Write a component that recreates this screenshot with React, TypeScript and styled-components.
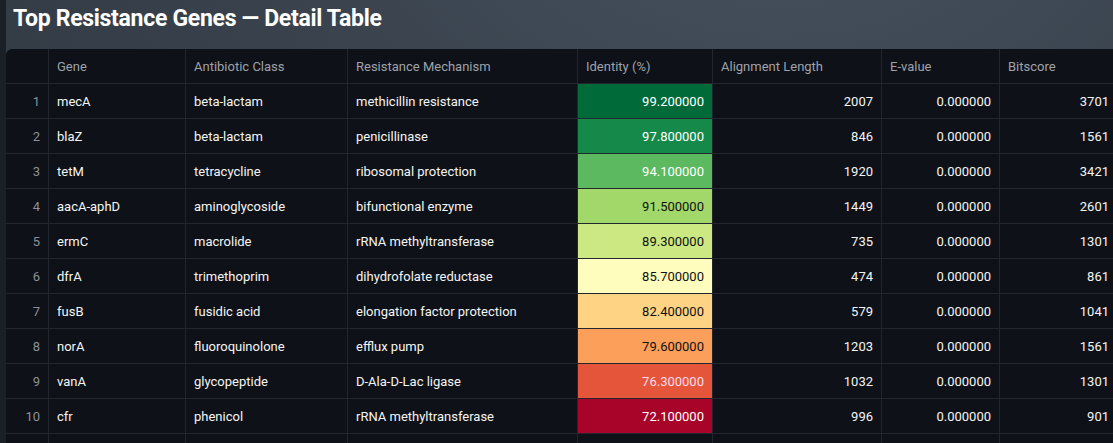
import React from "react";
import styled, { createGlobalStyle } from "styled-components";

const Global = createGlobalStyle`
  body {
    margin: 0;
    background: #0e1117;
    font-family: "Source Sans Pro", Roboto, "Noto Sans", sans-serif;
  }
`;

const rows = [
  ["mecA", "beta-lactam", "methicillin resistance", 99.2, 2007, 3701],
  ["blaZ", "beta-lactam", "penicillinase", 97.8, 846, 1561],
  ["tetM", "tetracycline", "ribosomal protection", 94.1, 1920, 3421],
  ["aacA-aphD", "aminoglycoside", "bifunctional enzyme", 91.5, 1449, 2601],
  ["ermC", "macrolide", "rRNA methyltransferase", 89.3, 735, 1301],
  ["dfrA", "trimethoprim", "dihydrofolate reductase", 85.7, 474, 861],
  ["fusB", "fusidic acid", "elongation factor protection", 82.4, 579, 1041],
  ["norA", "fluoroquinolone", "efflux pump", 79.6, 1203, 1561],
  ["vanA", "glycopeptide", "D-Ala-D-Lac ligase", 76.3, 1032, 1301],
  ["cfr", "phenicol", "rRNA methyltransferase", 72.1, 996, 901],
] as const;

const heat = [
  ["#006b39", "#fff"],
  ["#15894a", "#fff"],
  ["#5cb960", "#fff"],
  ["#a2d76a", "#111"],
  ["#cbe883", "#111"],
  ["#fefdbe", "#111"],
  ["#fed484", "#111"],
  ["#fb9f5a", "#111"],
  ["#e4553a", "#fde"],
  ["#a80328", "#fff"],
];

const cols = "43px 137px 162px 230px 135px 169px 118px 130px";

const Page = styled.div`
  width: 1113px;
  height: 443px;
  overflow: hidden;
  background: radial-gradient(ellipse at 70% -40%, #4a5561 0%, #3a434e 45%, #2f3740 100%);
  padding-left: 6px;
  box-sizing: border-box;
  border-left: 6px solid #1b1f26;
`;

const Title = styled.h2`
  margin: 0;
  height: 49px;
  padding: 2px 0 0 1px;
  box-sizing: border-box;
  color: #fff;
  font-size: 23px;
  font-weight: 700;
  letter-spacing: -0.3px;
  line-height: 34px;
`;

const Table = styled.div`
  background: #0e1117;
  border-top-left-radius: 6px;
  height: 394px;
  margin-left: -6px;
`;

const Row = styled.div<{ $head?: boolean }>`
  display: grid;
  grid-template-columns: ${cols};
  height: 35px;
  border-bottom: 1px solid #23262e;
  box-sizing: border-box;
  color: ${(p) => (p.$head ? "#9ea3ab" : "#f5f5f5")};
  font-size: 13px;
`;

const Cell = styled.div<{ $right?: boolean; $bg?: string; $fg?: string; $muted?: boolean }>`
  display: flex;
  align-items: center;
  justify-content: ${(p) => (p.$right ? "flex-end" : "flex-start")};
  padding: 0 8px;
  border-right: 1px solid #23262e;
  background: ${(p) => p.$bg ?? "transparent"};
  color: ${(p) => p.$fg ?? (p.$muted ? "#8b9098" : "inherit")};
  white-space: nowrap;
  overflow: hidden;
`;

export default function App() {
  return (
    <Page>
      <Global />
      <Title>Top Resistance Genes — Detail Table</Title>
      <Table>
        <Row $head>
          <Cell />
          <Cell>Gene</Cell>
          <Cell>Antibiotic Class</Cell>
          <Cell>Resistance Mechanism</Cell>
          <Cell>Identity (%)</Cell>
          <Cell>Alignment Length</Cell>
          <Cell>E-value</Cell>
          <Cell>Bitscore</Cell>
        </Row>
        {rows.map((r, i) => (
          <Row key={i}>
            <Cell $right $muted>{i + 1}</Cell>
            <Cell>{r[0]}</Cell>
            <Cell>{r[1]}</Cell>
            <Cell>{r[2]}</Cell>
            <Cell $right $bg={heat[i][0]} $fg={heat[i][1]}>{r[3].toFixed(6)}</Cell>
            <Cell $right>{r[4]}</Cell>
            <Cell $right>0.000000</Cell>
            <Cell $right style={{ paddingRight: 20 }}>{r[5]}</Cell>
          </Row>
        ))}
        <Row>
          <Cell /><Cell /><Cell /><Cell /><Cell /><Cell /><Cell /><Cell />
        </Row>
      </Table>
    </Page>
  );
}
